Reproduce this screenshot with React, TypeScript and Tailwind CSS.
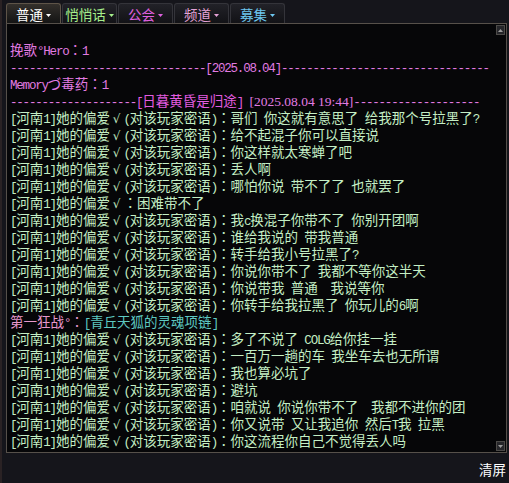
import React from "react";

const GREEN = "#c4eec4";
const PINK = "#e27be2";
const MAGENTA = "#e35ce0";
const ROSE = "#e898cc";
const TEAL = "#5ec9c2";

type Part = { t: string; c: string; serif?: boolean };

const PRE = "[河南1]她的偏爱√(对该玩家密语)：";
const msg = (t: string): Part[] => [{ t: PRE + t, c: GREEN }];

const lines: Part[][] = [
  [{ t: "挽歌°Hero：1", c: PINK }],
  [{ t: "-".repeat(31) + "[2025.08.04]" + "-".repeat(33), c: PINK }],
  [{ t: "Memoryづ毒药：1", c: PINK }],
  [
    { t: "-".repeat(20), c: PINK },
    { t: "[日暮黄昏是归途]", c: MAGENTA },
    { t: " ", c: PINK },
    { t: "[2025.08.04 19:44]", c: PINK, serif: true },
    { t: "-".repeat(20), c: PINK },
  ],
  msg("哥们 你这就有意思了 给我那个号拉黑了?"),
  msg("给不起混子你可以直接说"),
  msg("你这样就太寒蝉了吧"),
  msg("丢人啊"),
  msg("哪怕你说 带不了了 也就罢了"),
  [{ t: "[河南1]她的偏爱√：困难带不了", c: GREEN }],
  msg("我c换混子你带不了 你别开团啊"),
  msg("谁给我说的 带我普通"),
  msg("转手给我小号拉黑了?"),
  msg("你说你带不了 我都不等你这半天"),
  msg("你说带我 普通  我说等你"),
  msg("你转手给我拉黑了 你玩儿的6啊"),
  [
    { t: "第一狂战°：", c: ROSE },
    { t: "[青丘天狐的灵魂项链]", c: TEAL },
  ],
  msg("多了不说了 COLG给你挂一挂"),
  msg("一百万一趟的车 我坐车去也无所谓"),
  msg("我也算必坑了"),
  msg("避坑"),
  msg("咱就说 你说你带不了  我都不进你的团"),
  msg("你又说带 又让我追你 然后T我 拉黑"),
  msg("你这流程你自己不觉得丢人吗"),
];

// split text into latin / cjk runs so the half-width glyphs get a narrow advance
function Runs({ text, serif }: { text: string; serif?: boolean }) {
  if (serif) return <span className="font-['Liberation_Serif']">{text}</span>;
  const out: React.ReactNode[] = [];
  let buf = "";
  let latin: boolean | null = null;
  const flush = (k: number) => {
    if (!buf) return;
    out.push(
      latin ? (
        <span key={k} className="font-['Liberation_Mono'] text-[12.5px] tracking-[-1.2px]">
          {buf}
        </span>
      ) : (
        <span key={k}>{buf}</span>
      )
    );
    buf = "";
  };
  [...text].forEach((ch, i) => {
    if (ch === "√") {
      flush(i);
      out.push(
        <span key={"v" + i} className="inline-block w-[13.5px] text-center font-['DejaVu_Sans'] text-[12px]">
          √
        </span>
      );
      latin = null;
      return;
    }
    if (ch === "：") {
      flush(i);
      out.push(
        <span key={"c" + i} className="font-['Noto_Sans_CJK_TC']">
          ：
        </span>
      );
      latin = null;
      return;
    }
    const isLatin = ch.charCodeAt(0) < 0x2000;
    if (latin !== null && isLatin !== latin) flush(i);
    latin = isLatin;
    buf += ch;
  });
  flush(text.length + 1);
  return <>{out}</>;
}

const tabs = [
  { label: "普通", color: "#ffffff", active: true },
  { label: "悄悄话", color: "#a6f08c" },
  { label: "公会", color: "#e062e0" },
  { label: "频道", color: "#e4a2d6" },
  { label: "募集", color: "#6ec8f0" },
];

const Caret = ({ color }: { color: string }) => (
  <svg width="5" height="3" viewBox="0 0 5 3" className="ml-[3px] mt-[1px]">
    <polygon points="0,0 5,0 2.5,3" fill={color} />
  </svg>
);

const ScrollBtn = ({ up }: { up?: boolean }) => (
  <div className="w-[9px] h-[10px] bg-[#26262a] border border-[#4c4a48] flex items-center justify-center">
    <svg width="5" height="3" viewBox="0 0 5 3">
      <polygon points={up ? "0,3 5,3 2.5,0" : "0,0 5,0 2.5,3"} fill="#9c9c9c" />
    </svg>
  </div>
);

export default function App() {
  return (
    <div className="w-[509px] h-[483px] bg-[#15151b] border-l-2 border-[#2a2224] overflow-hidden font-['Noto_Sans_CJK_SC',sans-serif] text-[13.5px]">
      {/* tabs */}
      <div className="flex gap-[1px] pl-[4px] pt-[3px] h-[23px]">
        {tabs.map((t) => (
          <div
            key={t.label}
            className={
              t.active
                ? "w-[55px] h-[20px] rounded-t-[3px] border border-b-0 border-[#5e5448] bg-gradient-to-b from-[#34302c] to-[#141414] flex items-center justify-center pt-[2px] text-[13.5px]"
                : "w-[55px] h-[20px] rounded-t-[3px] border border-b-0 border-[#34343a] bg-gradient-to-b from-[#222228] to-[#121216] flex items-center justify-center pt-[2px] text-[13.5px]"
            }
            style={{ color: t.color }}
          >
            <span>{t.label}</span>
            <Caret color={t.color} />
          </div>
        ))}
      </div>

      {/* chat panel */}
      <div className="ml-[4px] w-[501px] h-[430px] border border-[#56504a] bg-[#060608] flex">
        <div className="flex-1 pl-[3px] pt-[17px] leading-[17px] whitespace-pre">
          {lines.map((parts, i) => (
            <div key={i} className="h-[17px]">
              {parts.map((p, j) => (
                <span key={j} style={{ color: p.c }}>
                  <Runs text={p.t} serif={p.serif} />
                </span>
              ))}
            </div>
          ))}
        </div>
        <div className="w-[9px] mr-[1px] py-[1px] flex flex-col justify-between">
          <ScrollBtn up />
          <ScrollBtn />
        </div>
      </div>

      {/* bottom bar */}
      <div className="h-[30px] flex items-center justify-end pr-[3px] pt-[2px] text-white text-[13.5px]">
        清屏
      </div>
    </div>
  );
}
